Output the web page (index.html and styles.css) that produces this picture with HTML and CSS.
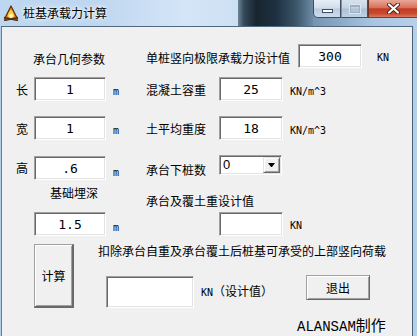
FILE: index.html
```html
<!DOCTYPE html>
<html>
<head>
    <link rel="stylesheet" href="styles.css">
</head>
<body>
<div class="window">
    <div class="titlebar">
        <svg class="app-icon" width="16" height="16" viewBox="0 0 16 16">
            <path d="M8 1 L14.5 14 L1.5 14 Z" fill="#e8892a" stroke="#5a2e0e" stroke-width="1.2" stroke-linejoin="round"/>
            <path d="M8 4.5 C9.8 7 11.2 8.8 11.2 10.6 C11.2 12.2 9.8 13.2 8 13.2 C6.2 13.2 4.8 12.2 4.8 10.6 C4.8 8.8 6.2 7 8 4.5 Z" fill="#f7d23a"/>
            <ellipse cx="8" cy="10.8" rx="1.8" ry="1.9" fill="#fffbd0"/>
            <path d="M1 12.5 L15 15.5 M15 12.5 L1 15.5" stroke="#5a2e0e" stroke-width="1.6"/>
        </svg>
        <span class="title">桩基承载力计算</span>
        <div class="glass-light"></div>
        <div class="glass-dark"></div>
        <div class="caption-btns">
            <div class="cbtn cbtn-min"><span class="g-min"></span></div>
            <div class="cbtn cbtn-max"><span class="g-max"></span></div>
            <div class="cbtn cbtn-close">
                <svg width="13" height="11" viewBox="0 0 13 11">
                    <path d="M2 1.5 L11 9.5 M11 1.5 L2 9.5" stroke="#4a1f18" stroke-width="4" stroke-linecap="round"/>
                    <path d="M2 1.5 L11 9.5 M11 1.5 L2 9.5" stroke="#ffffff" stroke-width="2.2" stroke-linecap="round"/>
                </svg>
            </div>
        </div>
    </div>

    <div class="frame">
        <div class="client">
            <div class="row r1">
                <span class="txt cap">承台几何参数</span>
                <span class="txt long">单桩竖向极限承载力设计值</span>
                <input class="tb" type="text" value="300">
                <span class="unit unit-kn">KN</span>
            </div>

            <div class="row r2">
                <span class="txt side">长</span>
                <input class="tb tb-l" type="text" value="1">
                <span class="unit m">m</span>
                <span class="txt rlabel">混凝土容重</span>
                <input class="tb" type="text" value="25">
                <span class="unit unit-r">KN/m^3</span>
            </div>

            <div class="row r3">
                <span class="txt side">宽</span>
                <input class="tb tb-l" type="text" value="1">
                <span class="unit m">m</span>
                <span class="txt rlabel">土平均重度</span>
                <input class="tb" type="text" value="18">
                <span class="unit unit-r">KN/m^3</span>
            </div>

            <div class="row r4">
                <span class="txt side">高</span>
                <input class="tb tb-l" type="text" value=".6">
                <span class="unit m">m</span>
                <span class="txt rlabel">承台下桩数</span>
                <div class="combo">
                    <span class="combo-val">0</span>
                    <span class="combo-btn"><span class="arrow"></span></span>
                </div>
            </div>

            <div class="row r5">
                <span class="txt deep">基础埋深</span>
                <span class="txt cover">承台及覆土重设计值</span>
            </div>

            <div class="row r6">
                <input class="tb tb-l" type="text" value="1.5">
                <span class="unit m">m</span>
                <input class="tb tb-cover" type="text" value="">
                <span class="unit unit-r">KN</span>
            </div>

            <div class="bottom">
                <button class="btn calc">计算</button>
                <div class="result-col">
                    <span class="txt">扣除承台自重及承台覆土后桩基可承受的上部竖向荷载</span>
                    <div class="result-row">
                        <input class="tb tb-res" type="text" value="">
                        <span class="txt kn-design"><span class="unit">KN</span>（设计值）</span>
                        <button class="btn exit">退出</button>
                    </div>
                    <span class="sign"><span class="sign-latin">ALANSAM</span>制作</span>
                </div>
            </div>
        </div>
    </div>
</div>
</body>
</html>
```

FILE: styles.css
```css
body {
    margin: 0;
    font-family: "Noto Sans CJK SC", sans-serif;
    font-size: 12px;
    color: #000;
    overflow: hidden;
}
.window {
    width: 417px;
    height: 336px;
    display: flex;
    flex-direction: column;
    background-color: #b9d3ee;
}

/* title bar: aero glass over a blurred desktop */
.titlebar {
    height: 26px;
    flex-shrink: 0;
    display: flex;
    align-items: flex-start;
    background-color: #bed7f0;
}
.app-icon {
    flex-shrink: 0;
    margin: 5px 0 0 3px;
}
.title {
    flex-shrink: 0;
    margin: 6px 0 0 4px;
    line-height: 14px;
    text-shadow: 0 0 6px #fff, 0 0 3px #fff;
}
.glass-light {
    flex: 1;
    align-self: stretch;
    background-color: #cbdff4;
    background-image: linear-gradient(90deg, #c1d8f0, #d4e5f7 60%, #cde0f3);
}
.glass-dark {
    width: 75px;
    flex-shrink: 0;
    align-self: stretch;
    background-color: #26394a;
    background-image: linear-gradient(90deg, #6c8594 0px, #34495a 6px, #17252f 18px, #1e3040 38px, #3b5569 58px, #6c8ba6 75px);
}
.caption-btns {
    display: flex;
    flex-shrink: 0;
    align-self: stretch;
    background-color: #9fbddb;
    background-image: linear-gradient(90deg, #7494b0, #a9c5e2 60px, #b6d0ec);
}
.cbtn {
    box-sizing: border-box;
    height: 18px;
    border: 1px solid #3e4f60;
    border-top: none;
    display: flex;
    align-items: center;
    justify-content: center;
}
.cbtn-min {
    width: 28px;
    border-bottom-left-radius: 5px;
    background-color: #cddbe9;
    background-image: linear-gradient(180deg, #e6eef6, #d0deeb 48%, #b9cbdd 52%, #cddced);
}
.cbtn-max {
    width: 27px;
    border-left: 1px solid #7f93a6;
    background-color: #c3d3e3;
    background-image: linear-gradient(180deg, #d6e2ee, #c3d3e2 48%, #adc1d5 52%, #bfd1e3);
}
.cbtn-close {
    width: 49px;
    border-left: 1px solid #6a3328;
    border-right: none;
    background-color: #cf5a3e;
    background-image: linear-gradient(180deg, #e9a797, #d9705a 45%, #c23d22 52%, #c94a2e 80%, #dc7a5c);
}
.g-min {
    width: 9px;
    height: 2px;
    margin-top: 5px;
    background: #fff;
    border: 1px solid #3b4d60;
}
.g-max {
    width: 8px;
    height: 6px;
    border: 1px solid #9cb0c3;
    box-shadow: inset 0 1px #9cb0c3, 0 0 0 1px #dde6ef;
}

/* client area */
.frame {
    flex: 1;
    display: flex;
    padding: 0 4px 0 1px;
    background-color: #b3cfeb;
}
.client {
    flex: 1;
    background: #f0f0f0;
    border: 1px solid #5f7f9f;
    border-bottom: none;
    border-top-color: #51687f;
    border-right-color: #4d6176;
}
.row {
    display: flex;
    align-items: flex-start;
    height: 24px;
}
.r1 { margin-top: 17px; }
.r2 { margin-top: 9px; }
.r3 { margin-top: 15px; }
.r4 { margin-top: 16px; }
.r5 { margin-top: 6px; }
.r6 { margin-top: 2px; height: 25px; }

.txt {
    line-height: 14px;
    white-space: nowrap;
}
.unit {
    font: 10px/12px "DejaVu Sans Mono", monospace;
    white-space: nowrap;
}
.cap {
    margin: 8px 0 0 31px;
    width: 113px;
}
.long {
    margin-top: 7px;
    width: 152px;
}
.unit-kn {
    margin: 8px 0 0 15px;
}
.side {
    margin: 6px 0 0 14px;
    width: 18px;
}
.m {
    box-sizing: border-box;
    width: 40px;
    padding-left: 7px;
    margin-top: 9px;
}
.rlabel {
    margin-top: 6px;
    width: 73px;
}
.unit-r {
    margin: 9px 0 0 7px;
}
.r4 .side { margin-top: 5px; }
.r4 .m { margin-top: 11px; }
.r4 .rlabel { margin-top: 7px; }
.deep {
    margin-left: 48px;
    width: 96px;
}
.cover {
    margin-top: 8px;
}

/* text boxes */
.tb {
    box-sizing: border-box;
    width: 64px;
    height: 24px;
    margin: 0;
    padding: 0;
    border: 1px solid;
    border-color: #a0a0a0 #fff #fff #a0a0a0;
    box-shadow: inset 1px 1px #696969, inset -1px -1px #e3e3e3;
    background: #fff;
    font: 13px "DejaVu Sans Mono", monospace;
    color: #000;
    text-align: center;
    outline: none;
}
.tb-l {
    width: 72px;
}
.r6 .tb-l { margin-left: 32px; }
.r6 .m { margin-top: 10px; }
.r6 .tb-cover { margin-left: 73px; }
.r6 .unit-r { margin-top: 8px; }

/* combo box */
.combo {
    box-sizing: border-box;
    width: 63px;
    height: 20px;
    margin-top: -1px;
    display: flex;
    align-items: center;
    border: 1px solid;
    border-color: #a0a0a0 #fff #fff #a0a0a0;
    box-shadow: inset 1px 1px #696969, inset -1px -1px #e3e3e3;
    background: #fff;
    padding: 1px;
}
.combo-val {
    flex: 1;
    padding-left: 2px;
    font: 13px/16px "Liberation Sans", sans-serif;
}
.combo-btn {
    box-sizing: border-box;
    width: 17px;
    height: 16px;
    display: flex;
    align-items: center;
    justify-content: center;
    background: #f0f0f0;
    border: 1px solid;
    border-color: #e3e3e3 #696969 #696969 #e3e3e3;
    box-shadow: inset 1px 1px #fff, inset -1px -1px #a0a0a0;
}
.arrow {
    width: 1px;
    height: 0;
    border-left: 3px solid transparent;
    border-right: 3px solid transparent;
    border-top: 4px solid #000;
}

/* buttons */
.btn {
    box-sizing: border-box;
    padding: 0;
    background: #f0f0f0;
    border: 1px solid;
    border-color: #a0a0a0 #696969 #696969 #a0a0a0;
    box-shadow: inset 1px 1px #fff, inset -1px -1px #a0a0a0;
    font: 12px "Noto Sans CJK SC", sans-serif;
    color: #000;
}

/* bottom part */
.bottom {
    display: flex;
    margin-top: 7px;
}
.calc {
    margin-left: 32px;
    width: 40px;
    height: 64px;
    border-right-width: 2px;
    border-bottom-width: 2px;
}
.result-col {
    margin-left: 24px;
    display: flex;
    flex-direction: column;
}
.result-row {
    display: flex;
    align-items: flex-start;
    margin-top: 18px;
}
.result-row .tb-res {
    margin-left: 8px;
    width: 88px;
    height: 32px;
}
.kn-design {
    margin: 8px 0 0 7px;
    width: 105px;
}
.exit {
    margin-top: -1px;
    width: 64px;
    height: 25px;
}
.sign {
    margin: 9px 0 0 199px;
    font-size: 15px;
    line-height: 16px;
    white-space: nowrap;
}
.sign-latin {
    font: 14px "Liberation Mono", monospace;
}
```
